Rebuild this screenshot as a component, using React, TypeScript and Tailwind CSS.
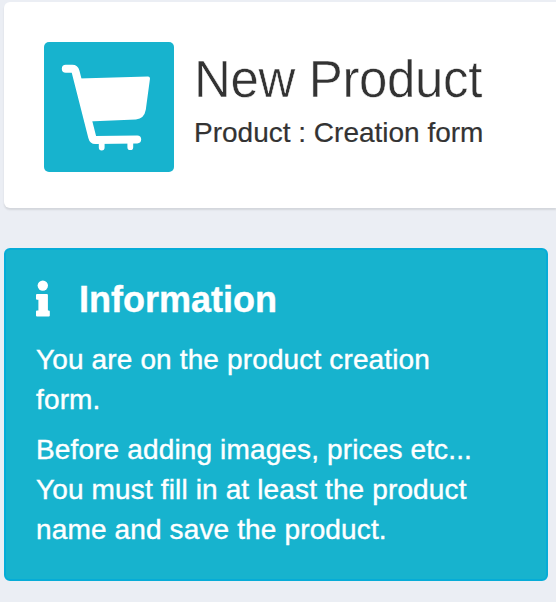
function CartIcon() {
  return (
    <svg viewBox="0 0 130 130" className="h-[130px] w-[130px]" fill="none" stroke="#fff" strokeLinecap="round" strokeLinejoin="round">
      <path d="M21.8 26.8H28.2Q30.8 26.8 31.6 29.8L48.2 95Q49 98.2 51.5 98.1L93.2 97.4" strokeWidth="8" />
      <path d="M35 38.6L104 36.6L99.8 67.5Q98.6 74.8 91.8 75.4L44 77.4Z" fill="#fff" strokeWidth="4" />
      <path d="M57.7 100V105.6M86.3 100V105.2" strokeWidth="5.8" />
    </svg>
  );
}

function InfoIcon() {
  return (
    <svg viewBox="0 0 14 37" className="h-[37px] w-[14px]" fill="#fff">
      <circle cx="6.8" cy="5.6" r="5.2" />
      <path d="M1 14H10.9Q11.9 14 11.9 15V30.6H12.8Q13.8 30.6 13.8 31.6V35.5Q13.8 36.5 12.8 36.5H1Q0 36.5 0 35.5V31.6Q0 30.6 1 30.6H2.4V19.8H1Q0 19.8 0 18.8V15Q0 14 1 14Z" />
    </svg>
  );
}

export default function App() {
  const messages = [
    ['You are on the product creation', 'form.'],
    ['Before adding images, prices etc...', 'You must fill in at least the product', 'name and save the product.'],
  ];

  return (
    <div className="h-[602px] w-[556px] overflow-hidden bg-[#ebeef4] pl-1 pt-0.5 font-['Liberation_Sans',Arial,sans-serif]">
      {/* Page header */}
      <header className="flex h-[206px] gap-5 rounded-l-md bg-white p-10 shadow-[0_2px_2px_rgba(0,0,0,0.1)]">
        <div className="h-[130px] w-[130px] shrink-0 overflow-hidden rounded-[5px] bg-[#17b3ce]">
          <CartIcon />
        </div>
        <div className="pt-2 whitespace-nowrap text-[#333]">
          <h1 className="text-[51px] leading-[60px] tracking-[-0.36px] [-webkit-text-stroke:0.5px_white]">New Product</h1>
          <p className="pt-[3px] text-[28px] leading-10 [-webkit-text-stroke:0.2px_#333]">Product : Creation form</p>
        </div>
      </header>

      {/* Information box */}
      <section className="mt-10 h-[333px] w-[544px] rounded-md border-2 border-[#06acd7] bg-[#17b3ce] p-[30px] text-white">
        <div className="flex h-[60px] gap-[29px]">
          <InfoIcon />
          <h2 className="text-[36px] leading-10 font-bold [-webkit-text-stroke:0.4px_white]">Information</h2>
        </div>
        <div className="space-y-2.5 text-[28px] leading-10 tracking-[0.14px] whitespace-nowrap [-webkit-text-stroke:0.4px_white]">
          {messages.map((lines, index) => (
            <p key={index}>
              {lines.map((line) => (
                <span key={line} className="block">{line}</span>
              ))}
            </p>
          ))}
        </div>
      </section>
    </div>
  );
}
